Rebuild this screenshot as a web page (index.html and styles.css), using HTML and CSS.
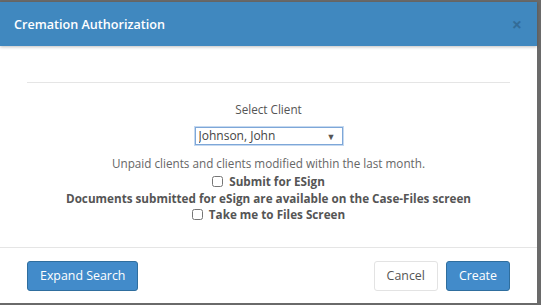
FILE: index.html
```html
<!doctype html>
<html>
<head>
<meta charset="utf-8">
<title>Cremation Authorization</title>
	<link rel="stylesheet" href="styles.css">
</head>
<body>
	<div class="modal">
		<div class="modal-header">
			<span class="modal-title">Cremation Authorization</span>
			<span class="close">&times;</span>
		</div>
		<div class="modal-body">
			<hr class="rule">
			<div class="label">Select Client</div>
			<div class="select-wrap">
				<select class="client-select">
					<option>Johnson, John</option>
				</select>
				<span class="caret">&#9660;</span>
			</div>
			<div class="hint">Unpaid clients and clients modified within the last month.</div>
			<label class="check"><input type="checkbox"> Submit for ESign</label>
			<div class="note">Documents submitted for eSign are available on the Case-Files screen</div>
			<label class="check"><input type="checkbox"> Take me to Files Screen</label>
		</div>
		<div class="modal-footer">
			<button type="button" class="btn btn-primary">Expand Search</button>
			<div class="spacer"></div>
			<button type="button" class="btn btn-default">Cancel</button>
			<button type="button" class="btn btn-primary">Create</button>
		</div>
	</div>
</body>
</html>
```
FILE: styles.css
```css
*{
	margin: 0;
	padding: 0;
	box-sizing: border-box;
}
body{
	background-color: #6a6a6a;
	font-family: "Open Sans", "Liberation Sans", sans-serif;
	font-size: 11.7px;
	color: #555;
}
.modal{
	width: 537px;
	height: 301px;
	margin-top: 2px;
	background-color: #fff;
	display: flex;
	flex-direction: column;
}
.modal-header{
	height: 44px;
	background-color: #4088bf;
	box-shadow: 0 1px 3px rgba(0,0,0,0.25);
	display: flex;
	align-items: center;
	padding: 0 15px 0 14px;
	position: relative;
	z-index: 1;
}
.modal-title{
	flex: 1;
	color: #fff;
	font-size: 12.6px;
	font-weight: 600;
}
.close{
	color: #000;
	opacity: 0.2;
	font-size: 18px;
	font-weight: bold;
	line-height: 1;
}
.modal-body{
	flex: 1;
	padding: 36px 27px 0 27px;
	display: flex;
	flex-direction: column;
	align-items: center;
	text-align: center;
}
.rule{
	width: 100%;
	border: 0;
	border-top: 1px solid #e5e5e5;
	margin-bottom: 18px;
}
.label{
	line-height: 17px;
	color: #555;
}
.select-wrap{
	position: relative;
	margin-top: 9px;
	margin-bottom: 10px;
}
.client-select{
	-webkit-appearance: none;
	appearance: none;
	width: 148px;
	height: 18px;
	border: 1px solid #7ea7d8;
	outline: 1px solid #c5d9f0;
	background: #fff;
	font-family: inherit;
	font-size: 12px;
	color: #444;
	padding: 0 3px;
	line-height: 16px;
}
.caret{
	position: absolute;
	right: 7px;
	top: 3px;
	font-size: 9px;
	color: #555;
	pointer-events: none;
}
.hint{
	line-height: 17px;
	margin-bottom: 1px;
	color: #666;
}
.check, .note{
	font-weight: bold;
	line-height: 16.5px;
	color: #555;
}
.check input{
	width: 11px;
	height: 11px;
	margin-right: 3px;
	vertical-align: -1px;
}
.modal-footer{
	height: 56px;
	border-top: 1px solid #e5e5e5;
	display: flex;
	align-items: center;
	padding: 0 27px;
	gap: 8px;
}
.spacer{
	flex: 1;
}
.btn{
	height: 30px;
	padding: 0 12px;
	font-family: inherit;
	font-size: 12.4px;
	border-radius: 3px;
	border: 1px solid transparent;
}
.btn-primary{
	background-color: #428bca;
	border-color: #2f6e9e;
	color: #fff;
}
.btn-default{
	background-color: #fff;
	border-color: #e3e3e3;
	color: #555;
}
```
